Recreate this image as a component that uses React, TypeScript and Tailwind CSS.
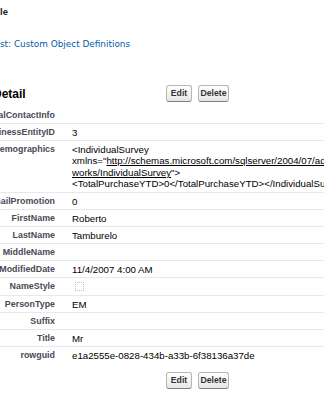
import React from 'react';

const rows: { label: string; value?: React.ReactNode; tall?: boolean }[] = [
  { label: 'AdditionalContactInfo' },
  { label: 'BusinessEntityID', value: '3' },
  {
    label: 'Demographics',
    value: (
      <div className="whitespace-nowrap leading-[11.4px]">
        <div>&lt;IndividualSurvey</div>
        <div>
          xmlns="<a className="underline">http://schemas.microsoft.com/sqlserver/2004/07/adventure-</a>
        </div>
        <div>
          <a className="underline">works/IndividualSurvey</a>"&gt;
        </div>
        <div>&lt;TotalPurchaseYTD&gt;0&lt;/TotalPurchaseYTD&gt;&lt;/IndividualSurvey&gt;</div>
      </div>
    ),
  },
  { label: 'EmailPromotion', value: '0' },
  { label: 'FirstName', value: 'Roberto' },
  { label: 'LastName', value: 'Tamburelo' },
  { label: 'MiddleName' },
  { label: 'ModifiedDate', value: '11/4/2007 4:00 AM' },
  {
    label: 'NameStyle',
    tall: true,
    value: <div className="ml-[3px] mt-[1px] w-[9px] h-[9px] border border-dotted border-[#bdbdbd]" />,
  },
  { label: 'PersonType', value: 'EM' },
  { label: 'Suffix' },
  { label: 'Title', value: 'Mr' },
  { label: 'rowguid', value: 'e1a2555e-0828-434b-a33b-6f38136a37de' },
];

const Buttons = () => (
  <div className="flex gap-[6px]">
    <button className="w-[26px] h-[17px] rounded-[3px] border border-[#b5b5b5] border-b-[#7f7f7f] bg-gradient-to-b from-white to-[#e6e6e6] text-[8.7px] font-bold leading-none text-[#333]">
      Edit
    </button>
    <button className="w-[31px] h-[17px] rounded-[3px] border border-[#b5b5b5] border-b-[#7f7f7f] bg-gradient-to-b from-white to-[#e6e6e6] text-[8.7px] font-bold leading-none text-[#333]">
      Delete
    </button>
  </div>
);

export default function App() {
  return (
    <div className="w-[324px] h-[400px] overflow-hidden bg-white text-black font-['Liberation_Sans',Arial,sans-serif]">
      {/* page header */}
      <div className="mt-[6px] text-[9.5px] font-bold leading-[12px] text-[#222]">le</div>
      <div className="mt-[20px] text-[8.9px] leading-[12px] text-[#015ba7] font-['DejaVu_Sans',Verdana,sans-serif]">
        st: Custom Object Definitions
      </div>

      {/* detail block */}
      <div className="mt-[35px] flex items-center h-[17px]">
        <div className="w-[173px] -ml-[7px] shrink-0 text-[12px] font-bold leading-none">Detail</div>
        <Buttons />
      </div>

      <div className="mt-[5px]">
        {rows.map((r, i) => (
          <div
            key={r.label}
            className={`flex ${i < rows.length - 1 ? 'border-b border-[#e8e8e8]' : ''} ${r.tall ? 'min-h-[18px]' : ''}`}
          >
            <div className="w-[55px] shrink-0 flex justify-end whitespace-nowrap pt-[3px] pb-[2px] text-[8.9px] font-bold leading-[11px] text-[#4a4a56]">
              {r.label}
            </div>
            <div className="ml-[17px] pt-[3px] pb-[2px] text-[9.7px] leading-[11px] whitespace-nowrap">
              {r.value}
            </div>
          </div>
        ))}
      </div>

      <div className="mt-[9px] pl-[166px]">
        <Buttons />
      </div>
    </div>
  );
}
